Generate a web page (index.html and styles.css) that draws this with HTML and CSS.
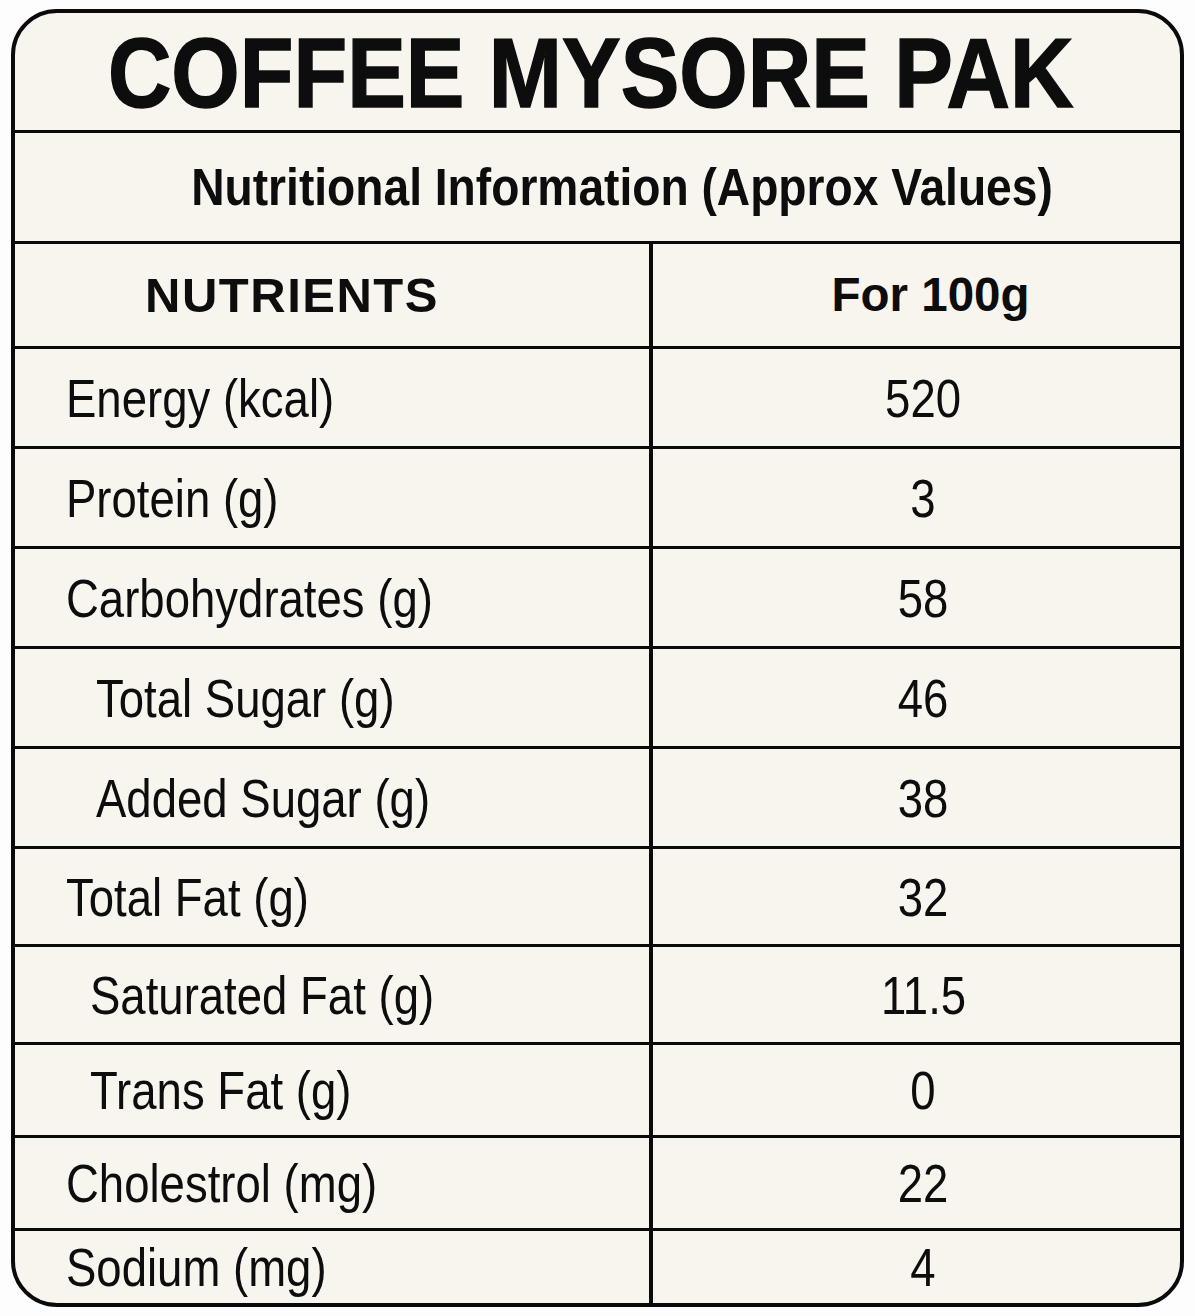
FILE: index.html
```html
<!DOCTYPE html>
<html lang="en">
<head>
<meta charset="utf-8">
<title>Coffee Mysore Pak – Nutritional Information</title>
<link rel="stylesheet" href="styles.css">
</head>
<body>
<div class="card">
  <div class="title-row"><h1 class="title"><span class="squeeze">COFFEE MYSORE PAK</span></h1></div>
  <div class="sub-row"><p class="sub"><span class="squeeze">Nutritional Information (Approx Values)</span></p></div>
  <div class="table">
    <div class="row head">
      <div class="name"><span class="head-name">NUTRIENTS</span></div>
      <div class="val"><span class="head-val">For 100g</span></div>
    </div>
    <div class="row r100">
      <div class="name"><span class="txt">Energy (kcal)</span></div>
      <div class="val"><span class="txt">520</span></div>
    </div>
    <div class="row r100">
      <div class="name"><span class="txt">Protein (g)</span></div>
      <div class="val"><span class="txt">3</span></div>
    </div>
    <div class="row r100">
      <div class="name"><span class="txt">Carbohydrates (g)</span></div>
      <div class="val"><span class="txt">58</span></div>
    </div>
    <div class="row r100">
      <div class="name indent"><span class="txt">Total Sugar (g)</span></div>
      <div class="val"><span class="txt">46</span></div>
    </div>
    <div class="row r100">
      <div class="name indent"><span class="txt">Added Sugar (g)</span></div>
      <div class="val"><span class="txt">38</span></div>
    </div>
    <div class="row r98">
      <div class="name"><span class="txt">Total Fat (g)</span></div>
      <div class="val"><span class="txt">32</span></div>
    </div>
    <div class="row r98">
      <div class="name indent-sm"><span class="txt">Saturated Fat (g)</span></div>
      <div class="val"><span class="txt">11.5</span></div>
    </div>
    <div class="row r93">
      <div class="name indent-sm"><span class="txt">Trans Fat (g)</span></div>
      <div class="val"><span class="txt">0</span></div>
    </div>
    <div class="row r93">
      <div class="name"><span class="txt">Cholestrol (mg)</span></div>
      <div class="val"><span class="txt">22</span></div>
    </div>
    <div class="row last">
      <div class="name"><span class="txt">Sodium (mg)</span></div>
      <div class="val"><span class="txt">4</span></div>
    </div>
  </div>
</div>
</body>
</html>
```
FILE: styles.css
```css
* { box-sizing: border-box; }

html, body {
  margin: 0;
  padding: 0;
  background: #fdfdfd;
}

body {
  font-family: "Liberation Sans", Arial, sans-serif;
  color: #0d0d0d;
}

.card {
  margin: 9px 0 0 11px;
  width: 1173px;
  height: 1298px;
  border: 4px solid #0a0a0a;
  border-radius: 46px;
  background: #f8f5ef;
  overflow: hidden;
  display: flex;
  flex-direction: column;
}

.title-row {
  height: 120px;
  border-bottom: 3px solid #0a0a0a;
  display: flex;
  align-items: center;
  justify-content: center;
  padding-right: 14px;
  padding-top: 1px;
}

.title {
  margin: 0;
  font-size: 99px;
  font-weight: 700;
  line-height: 1;
  white-space: nowrap;
  -webkit-text-stroke: 1.5px #0d0d0d;
}

.title .squeeze {
  display: inline-block;
  transform: scaleX(0.888);
}

.sub-row {
  height: 111px;
  border-bottom: 3px solid #0a0a0a;
  display: flex;
  align-items: center;
  justify-content: center;
  padding-left: 50px;
}

.sub {
  margin: 0;
  font-size: 51px;
  font-weight: 700;
  line-height: 1;
  white-space: nowrap;
}

.sub .squeeze {
  display: inline-block;
  transform: scaleX(0.905);
}

.table {
  flex: 1;
  display: flex;
  flex-direction: column;
}

.row {
  display: grid;
  grid-template-columns: 638px 1fr;
  border-bottom: 3px solid #0a0a0a;
}

.row.head { height: 105px; }
.row.r100 { height: 100px; }
.row.r98 { height: 98px; }
.row.r93 { height: 93px; }
.row.last { flex: 1; border-bottom: none; }

.name {
  border-right: 4px solid #0a0a0a;
  display: flex;
  align-items: center;
  padding-left: 51px;
  white-space: nowrap;
}

.name.indent { padding-left: 81px; }
.name.indent-sm { padding-left: 75px; }

.val {
  display: flex;
  align-items: center;
  justify-content: center;
  padding-left: 14px;
  white-space: nowrap;
}

.head .name {
  justify-content: center;
  padding-left: 0;
  padding-right: 80px;
}

.head .val { padding-left: 28px; }

.head-name {
  font-size: 49px;
  font-weight: 700;
  letter-spacing: 1.5px;
  line-height: 1;
}

.head-val {
  font-size: 47.5px;
  font-weight: 700;
  line-height: 1;
}

.txt {
  font-size: 54px;
  line-height: 1;
  display: inline-block;
  transform: scaleX(0.843);
}

.name .txt { transform-origin: left center; }
.val .txt { transform-origin: center center; }
```
